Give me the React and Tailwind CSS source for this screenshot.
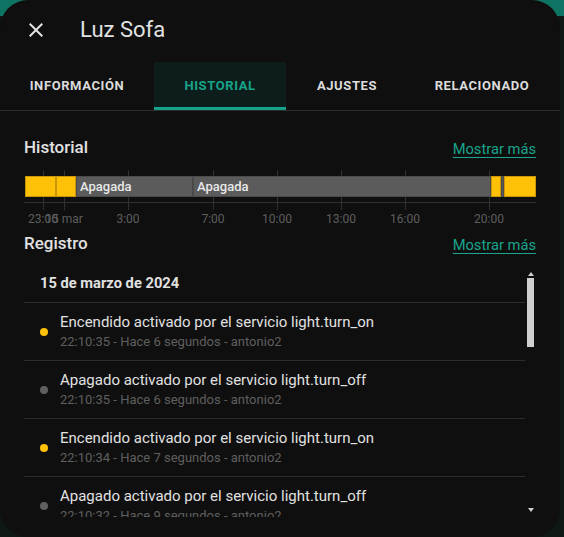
import React from 'react'

const entries = [
    { on: true, time: '22:10:35', ago: 'Hace 6 segundos' },
    { on: false, time: '22:10:35', ago: 'Hace 6 segundos' },
    { on: true, time: '22:10:34', ago: 'Hace 7 segundos' },
    { on: false, time: '22:10:32', ago: 'Hace 9 segundos' },
    { on: true, time: '22:10:30', ago: 'Hace 11 segundos' },
]

const ticks = [
    { x: 19, label: '23:00' },
    { x: 40, label: '15 mar' },
    { x: 104, label: '3:00' },
    { x: 189, label: '7:00' },
    { x: 253, label: '10:00' },
    { x: 317, label: '13:00' },
    { x: 381, label: '16:00' },
    { x: 465, label: '20:00' },
]

const segments = [
    { x1: 1, x2: 32, on: true },
    { x1: 32, x2: 52, on: true },
    { x1: 52, x2: 169, on: false, label: 'Apagada' },
    { x1: 169, x2: 467, on: false, label: 'Apagada' },
    { x1: 467, x2: 477, on: true },
    { x1: 477, x2: 480, on: false },
    { x1: 480, x2: 512, on: true },
]

function Timeline() {
    return (
        <svg width="512" height="62" className="block">
            {ticks.map(t => (
                <line key={t.label} x1={t.x + 0.5} x2={t.x + 0.5} y1="4" y2="44" stroke="#303030" strokeWidth="1" />
            ))}
            <line x1="0" x2="512" y1="36.5" y2="36.5" stroke="#303030" strokeWidth="1" />
            {segments.map((s, i) => (
                <rect key={i} x={s.x1 + 0.5} y="10.5" width={s.x2 - s.x1 - 1} height="20"
                    fill={s.on ? '#ffc107' : '#5b5b5b'} stroke={s.on ? '#c99703' : '#4a4a4a'} strokeWidth="1" />
            ))}
            {segments.filter(s => s.label).map((s, i) => (
                <text key={i} x={s.x1 + 4} y="25" fill="#e8e8e8" fontSize="13" fontWeight="500" fontFamily="Roboto, sans-serif">{s.label}</text>
            ))}
            {ticks.map(t => (
                <text key={t.label} x={t.x} y="57" fill="#5e5e5e" fontSize="12" textAnchor="middle" fontFamily="Roboto, sans-serif">{t.label}</text>
            ))}
        </svg>
    )
}

function SectionHeader({ title }) {
    return (
        <div className="flex items-center justify-between h-[24px]">
            <span className="text-[17px] font-medium text-[#e1e1e1]">{title}</span>
            <span className="text-[14.7px] text-[#1aa58c] underline underline-offset-[3px] pt-[2px]">Mostrar más</span>
        </div>
    )
}

function Scrollbar() {
    return (
        <div className="w-[11px] shrink-0 flex flex-col items-center pt-[8px] pb-[5px]">
            <svg width="6" height="4" viewBox="0 0 6 4" className="block">
                <path d="M3 0 L6 4 L0 4 Z" fill="#cfcfcf" />
            </svg>
            <div className="mt-[2px] w-[7px] h-[69px] bg-[#cfcfcf]" />
            <div className="flex-1" />
            <svg width="6" height="4" viewBox="0 0 6 4" className="block">
                <path d="M0 0 L6 0 L3 4 Z" fill="#cfcfcf" />
            </svg>
        </div>
    )
}

export default function App() {
    return (
        <div className="w-[564px] h-[537px] overflow-hidden bg-[linear-gradient(#0e7564_0_16px,#0f1715_16px)] font-[Roboto,sans-serif]">
            <div className="w-[560px] h-[537px] rounded-[28px] bg-[#0f0f0f] flex flex-col overflow-hidden">

                {/* Header */}
                <div className="h-[62px] shrink-0 flex items-center pl-[24px] pb-[3px]">
                    <svg width="24" height="24" viewBox="0 0 24 24" fill="#e1e1e1">
                        <path d="M19,6.41L17.59,5L12,10.59L6.41,5L5,6.41L10.59,12L5,17.59L6.41,19L12,13.41L17.59,19L19,17.59L13.41,12L19,6.41Z" />
                    </svg>
                    <span className="ml-[32px] text-[22px] text-[#e1e1e1]">Luz Sofa</span>
                </div>

                {/* Tabs */}
                <div className="flex h-[49px] shrink-0 border-b border-[#2c2c2c] text-[13px] font-bold tracking-[0.6px] uppercase">
                    <div className="w-[154px] flex items-center justify-center text-[#dcdcdc]">Información</div>
                    <div className="w-[132px] flex flex-col bg-[#0c1d1b] text-[#17a38a]">
                        <div className="flex-1 flex items-center justify-center pt-[3px]">Historial</div>
                        <div className="h-[3px] bg-[#17a38a]" />
                    </div>
                    <div className="w-[122px] flex items-center justify-center text-[#dcdcdc]">Ajustes</div>
                    <div className="flex-1 flex items-center justify-center text-[#dcdcdc] pr-[4px]">Relacionado</div>
                </div>

                {/* Content */}
                <div className="px-[24px] pt-[25px] flex flex-col">
                    <SectionHeader title="Historial" />
                    <div className="mt-[6px]">
                        <Timeline />
                    </div>
                    <div className="mt-[4px]">
                        <SectionHeader title="Registro" />
                    </div>

                    <div className="mt-[8px] h-[253px] flex">
                        <div className="flex-1 overflow-hidden">
                            <div className="h-[39px] flex items-center px-[16px] border-b border-[#2c2c2c] text-[14.7px] font-bold text-[#e1e1e1]">
                                15 de marzo de 2024
                            </div>
                            {entries.map((e, i) => (
                                <div key={i} className="h-[58px] flex items-center gap-[12px] px-[16px] border-b border-[#2c2c2c]">
                                    <div className={`w-[8px] h-[8px] rounded-full shrink-0 ${e.on ? 'bg-[#ffc107]' : 'bg-[#5f5f5f]'}`} />
                                    <div className="flex flex-col">
                                        <span className="text-[15px] leading-[20px] text-[#e1e1e1]">
                                            {e.on ? 'Encendido activado por el servicio light.turn_on' : 'Apagado activado por el servicio light.turn_off'}
                                        </span>
                                        <span className="text-[13px] leading-[20px] text-[#5f5f5f]">{e.time} - {e.ago} - antonio2</span>
                                    </div>
                                </div>
                            ))}
                        </div>
                        <Scrollbar />
                    </div>
                </div>
            </div>
        </div>
    )
}
